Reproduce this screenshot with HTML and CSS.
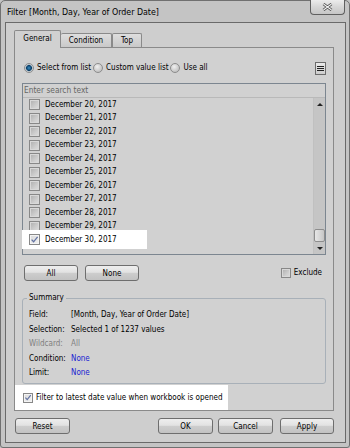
FILE: index.html
```html
<!DOCTYPE html>
<html>
<head>
<meta charset="utf-8">
<link rel="stylesheet" href="styles.css">
</head>
<body>
<div class="window">
  <div class="titlebar">
    <span class="title">Filter [Month, Day, Year of Order Date]</span>
    <div class="close">
      <svg width="11" height="8" viewBox="0 0 11 8"><path d="M1.5 1 L9.5 7 M9.5 1 L1.5 7" stroke="#4a4a4a" stroke-width="2.8" fill="none"/><path d="M1.5 1 L9.5 7 M9.5 1 L1.5 7" stroke="#f4f4f4" stroke-width="1.1" fill="none"/></svg>
    </div>
  </div>
  <div class="client">
    <div class="tabs">
      <div class="tab active t-general">General</div>
      <div class="tab t-condition">Condition</div>
      <div class="tab t-top">Top</div>
    </div>
    <div class="panel">
      <div class="radios">
        <span class="rb on"></span><span class="rlabel">Select from list</span>
        <span class="rb"></span><span class="rlabel">Custom value list</span>
        <span class="rb"></span><span class="rlabel">Use all</span>
        <span class="menu-btn"><svg width="7" height="7" viewBox="0 0 7 7"><path d="M0 1.5 H7 M0 3.5 H7 M0 5.5 H7" stroke="#222" stroke-width="1.1"/></svg></span>
      </div>
      <div class="listbox">
        <div class="search">Enter search text</div>
        <div class="list-body">
          <div class="rows">
            <div class="row"><span class="cb"></span><span class="rtext">December 20, 2017</span></div>
            <div class="row"><span class="cb"></span><span class="rtext">December 21, 2017</span></div>
            <div class="row"><span class="cb"></span><span class="rtext">December 22, 2017</span></div>
            <div class="row"><span class="cb"></span><span class="rtext">December 23, 2017</span></div>
            <div class="row"><span class="cb"></span><span class="rtext">December 24, 2017</span></div>
            <div class="row"><span class="cb"></span><span class="rtext">December 25, 2017</span></div>
            <div class="row"><span class="cb"></span><span class="rtext">December 26, 2017</span></div>
            <div class="row"><span class="cb"></span><span class="rtext">December 27, 2017</span></div>
            <div class="row"><span class="cb"></span><span class="rtext">December 28, 2017</span></div>
            <div class="row"><span class="cb"></span><span class="rtext">December 29, 2017</span></div>
            <div class="row hl"><span class="cb checked"><svg width="9" height="9" viewBox="0 0 9 9"><path d="M1.6 4.6 L3.6 6.8 L7.6 1.8" stroke="#6272a2" stroke-width="1.3" fill="none"/></svg></span><span class="rtext">December 30, 2017</span></div>
          </div>
          <div class="scrollbar">
            <div class="sb-arrow"><span class="tri-up"></span></div>
            <div class="sb-track"></div>
            <div class="sb-thumb"></div>
            <div class="sb-arrow down"><span class="tri-down"></span></div>
          </div>
        </div>
      </div>
      <div class="btnrow">
        <button class="btn small">All</button>
        <button class="btn small">None</button>
        <span class="exclude"><span class="cb"></span><span class="xtext">Exclude</span></span>
      </div>
      <fieldset class="summary">
        <legend>Summary</legend>
        <div class="sgrid">
          <span class="lbl">Field:</span><span>[Month, Day, Year of Order Date]</span>
          <span class="lbl">Selection:</span><span>Selected 1 of 1237 values</span>
          <span class="lbl dim">Wildcard:</span><span class="dim">All</span>
          <span class="lbl">Condition:</span><span class="link">None</span>
          <span class="lbl">Limit:</span><span class="link">None</span>
        </div>
      </fieldset>
      <div class="latest"><span class="cb checked"><svg width="9" height="9" viewBox="0 0 9 9"><path d="M1.6 4.6 L3.6 6.8 L7.6 1.8" stroke="#6272a2" stroke-width="1.3" fill="none"/></svg></span><span class="ltext">Filter to latest date value when workbook is opened</span></div>
    </div>
    <div class="footer">
      <button class="btn reset">Reset</button>
      <button class="btn ok">OK</button>
      <button class="btn cancel">Cancel</button>
      <button class="btn apply">Apply</button>
    </div>
  </div>
</div>
</body>
</html>
```

FILE: styles.css
```css
* { box-sizing: border-box; }
html, body { margin: 0; padding: 0; }
body {
  width: 350px;
  height: 448px;
  overflow: hidden;
  background: #c3c3c3;
  font-family: "DejaVu Sans Condensed", "Liberation Sans", sans-serif;
  font-size: 8px;
  color: #000;
}
.window {
  width: 350px;
  height: 448px;
  border: 1px solid #707070;
  border-radius: 5px 5px 3px 3px;
  background: #c4c4c4;
}
.titlebar {
  height: 21px;
  display: flex;
  justify-content: space-between;
  align-items: flex-start;
  padding-left: 6px;
}
.title {
  font-size: 8.8px;
  line-height: 12px;
  margin-top: 5px;
  color: #000;
}
.close {
  width: 35px;
  height: 15px;
  margin-right: 4px;
  margin-top: -1px;
  border: 1px solid #5f5f5f;
  border-top: none;
  border-radius: 0 0 4px 4px;
  background: linear-gradient(#ececec, #d6d6d6 50%, #c6c6c6);
  display: flex;
  align-items: center;
  justify-content: center;
}
.client {
  margin: 0 4px;
  width: 341px;
  height: 421px;
  border: 1px solid #6a6a6a;
  background: #cecece;
  padding: 7px 11px 0 8px;
}
.tabs {
  display: flex;
  align-items: flex-end;
  height: 17px;
}
.tab {
  height: 14px;
  border: 1px solid #8a8a8a;
  border-bottom: none;
  border-radius: 2px 2px 0 0;
  background: linear-gradient(#dedede, #c9c9c9);
  display: flex;
  align-items: center;
  justify-content: center;
  line-height: 10px;
  padding-top: 1px;
}
.tab.active {
  height: 18px;
  margin-bottom: -1px;
  background: #d1d1d1;
  position: relative;
  z-index: 2;
  padding-top: 0;
  padding-bottom: 2px;
}
.t-general { width: 47px; }
.t-condition { width: 51px; border-left: none; }
.t-top { width: 30px; margin-left: 0; }
.panel {
  position: relative;
  z-index: 1;
  border: 1px solid #8a8a8a;
  background: #d1d1d1;
}
.radios {
  margin-top: 13px;
  height: 14px;
  display: flex;
  align-items: center;
  padding-left: 9px;
  padding-right: 7px;
}
.rb {
  width: 10px;
  height: 10px;
  border-radius: 50%;
  border: 1px solid #8c8c8c;
  background: radial-gradient(circle at 40% 35%, #f0f0f0, #c4c4c4 70%, #b8b8b8);
  flex: none;
}
.rb.on {
  background: radial-gradient(circle at 50% 50%, #3d8ec0 0, #1a5e8e 1.6px, #0f3f66 2.6px, #9fb2c0 3.2px, #dcdcdc 4px, #c0c0c0 100%);
}
.rlabel {
  margin-left: 3px;
  margin-right: 2px;
  line-height: 12px;
}
.menu-btn {
  margin-left: auto;
  width: 11px;
  height: 13px;
  border: 1px solid #6c6c6c;
  background: linear-gradient(#eaeaea, #cdcdcd);
  display: flex;
  align-items: center;
  justify-content: center;
}
.listbox {
  margin: 8px 7px 0 7px;
  height: 172px;
  border: 1px solid #7c8690;
  background: #d1d1d1;
}
.search {
  height: 14px;
  border-bottom: 1px solid #b9b9b9;
  padding-left: 1px;
  color: #666;
  font-size: 8.3px;
  line-height: 13px;
}
.list-body {
  display: flex;
  height: 156px;
}
.rows {
  flex: 1;
}
.row {
  position: relative;
  height: 13.5px;
  display: flex;
  align-items: center;
  padding-left: 6px;
}
.row.hl::before {
  content: "";
  position: absolute;
  left: -1px;
  top: -3px;
  bottom: -2px;
  width: 125px;
  background: #fff;
}
.cb {
  position: relative;
  width: 11px;
  height: 11px;
  flex: none;
  border: 1px solid #888;
  background: linear-gradient(135deg, #adadad, #cdcdcd 60%, #dedede);
  box-shadow: inset 0 0 0 1px #d8d8d8;
  display: flex;
  align-items: center;
  justify-content: center;
}
.cb.checked {
  background: linear-gradient(135deg, #d9d9d9, #f2f2f2);
  box-shadow: inset 0 0 0 1px #f4f4f4;
}
.rtext {
  position: relative;
  margin-left: 5px;
  line-height: 12px;
}
.scrollbar {
  width: 12px;
  flex: none;
  background: #c5c5c5;
  border-left: 1px solid #c0c0c0;
  display: flex;
  flex-direction: column;
}
.sb-arrow {
  height: 13px;
  display: flex;
  align-items: center;
  justify-content: center;
}
.sb-arrow.down { height: 12px; }
.tri-up {
  width: 0; height: 0;
  border-left: 3px solid transparent;
  border-right: 3px solid transparent;
  border-bottom: 3px solid #222;
}
.tri-down {
  width: 0; height: 0;
  border-left: 3px solid transparent;
  border-right: 3px solid transparent;
  border-top: 3px solid #222;
}
.sb-track { flex: 1; }
.sb-thumb {
  height: 13px;
  border: 1px solid #8d8d8d;
  border-radius: 2px;
  background: linear-gradient(90deg, #e6e6e6, #d4d4d4 60%, #c6c6c6);
}
.btnrow {
  margin-top: 10px;
  height: 16px;
  display: flex;
  align-items: center;
  padding: 0 11px 0 9px;
  gap: 7px;
}
.btn {
  height: 16px;
  width: 55px;
  padding: 0;
  border: 1px solid #6e6e6e;
  border-radius: 3px;
  background: linear-gradient(#eeeeee, #e2e2e2 45%, #cdcdcd 52%, #c2c2c2);
  font-family: inherit;
  font-size: 8px;
  color: #000;
  line-height: 13px;
  text-align: center;
}
.btn.small { width: 54px; }
.exclude {
  margin-left: auto;
  display: flex;
  align-items: center;
}
.exclude .cb { width: 10px; height: 10px; }
.xtext { margin-left: 3px; line-height: 12px; }
.summary {
  margin: 12px 7px 0 7px;
  border: 1px solid #a8b0b8;
  border-radius: 3px;
  padding: 5px 4px 2px 4px;
  min-width: 0;
}
.summary legend {
  padding: 0 2px;
  line-height: 10px;
  font-size: 8px;
}
.sgrid {
  margin-left: 2px;
  display: grid;
  grid-template-columns: 42px 1fr;
  grid-auto-rows: 14.5px;
  align-items: center;
  line-height: 12px;
}
.dim { color: #808080; }
.link { color: #1b22d2; }
.latest {
  margin-top: 1.5px;
  width: 213px;
  height: 25px;
  background: #fff;
  display: flex;
  align-items: center;
  padding-left: 8px;
}
.latest .cb { width: 10px; height: 10px; }
.ltext { margin-left: 3px; line-height: 12px; }
.footer {
  margin-top: 7px;
  display: flex;
  align-items: center;
  padding-left: 1px;
}
.reset { width: 55px; margin-right: auto; }
.ok { width: 55px; }
.cancel { width: 55px; margin-left: 5px; }
.apply { width: 54px; margin-left: 7px; }
```
